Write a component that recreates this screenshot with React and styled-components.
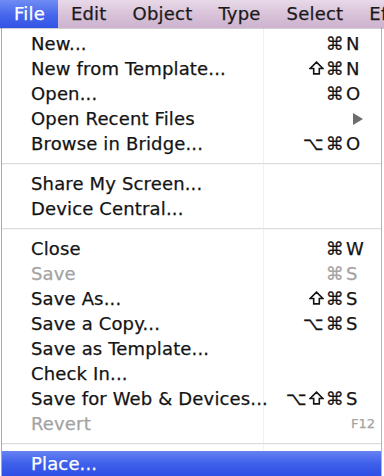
import React from "react";
import styled, { createGlobalStyle } from "styled-components";

const GlobalStyle = createGlobalStyle`
  html, body {
    margin: 0;
    padding: 0;
    background: #ffffff;
  }
  body {
    font-family: "DejaVu Sans", "Liberation Sans", sans-serif;
    font-size: 18px;
    letter-spacing: 0.15px;
    color: #111111;
    overflow: hidden;
    -webkit-text-stroke: 0.25px currentColor;
  }
`;

const titles = ["File", "Edit", "Object", "Type", "Select", "Effect"];

const groups = [
  [
    { label: "New...", mods: "⌘", key: "N" },
    { label: "New from Template...", mods: "⇧⌘", key: "N" },
    { label: "Open...", mods: "⌘", key: "O" },
    { label: "Open Recent Files", submenu: true },
    { label: "Browse in Bridge...", mods: "⌥⌘", key: "O" },
  ],
  [{ label: "Share My Screen..." }, { label: "Device Central..." }],
  [
    { label: "Close", mods: "⌘", key: "W" },
    { label: "Save", mods: "⌘", key: "S", disabled: true },
    { label: "Save As...", mods: "⇧⌘", key: "S" },
    { label: "Save a Copy...", mods: "⌥⌘", key: "S" },
    { label: "Save as Template..." },
    { label: "Check In..." },
    { label: "Save for Web & Devices...", mods: "⌥⇧⌘", key: "S" },
    { label: "Revert", fnKey: "F12", disabled: true },
  ],
  [{ label: "Place...", active: true }],
];

const ShiftIcon = () => (
  <ShiftSvg viewBox="0 0 16 15">
    <path
      d="M8 1.2 L14.8 8 H11 V13.8 H5 V8 H1.2 Z"
      fill="none"
      stroke="currentColor"
      strokeWidth="1.7"
      strokeLinejoin="miter"
    />
  </ShiftSvg>
);

const App = () => {
  return (
    <>
      <GlobalStyle />
      <Screen>
        <MenuBar>
          {titles.map((t, i) => (
            <MenuTitle key={t} $active={i === 0} $first={i === 0}>
              {t}
            </MenuTitle>
          ))}
        </MenuBar>
        <Menu>
          {groups.map((group, gi) => (
            <React.Fragment key={gi}>
              {gi > 0 && <Separator />}
              {group.map((item) => (
                <Row
                  key={item.label}
                  $disabled={item.disabled}
                  $active={item.active}
                >
                  <Label>{item.label}</Label>
                  {item.submenu && <Arrow />}
                  {item.key && (
                    <>
                      <Mods>
                        {item.mods
                          .split("")
                          .map((m, i) =>
                            m === "⇧" ? <ShiftIcon key={i} /> : <span key={i}>{m}</span>
                          )}
                      </Mods>
                      <Key>{item.key}</Key>
                    </>
                  )}
                  {item.fnKey && <FnKey>{item.fnKey}</FnKey>}
                </Row>
              ))}
            </React.Fragment>
          ))}
        </Menu>
      </Screen>
    </>
  );
};

export default App;

const Screen = styled.div`
  width: 384px;
  height: 476px;
  overflow: hidden;
  display: flex;
  flex-direction: column;
`;

const MenuBar = styled.div`
  height: 28px;
  flex: none;
  display: flex;
  align-items: stretch;
  white-space: nowrap;
  overflow: hidden;
  letter-spacing: 0.2px;
  background: linear-gradient(#e8d9e8, #d6bfd7 60%, #cdb3cf);
  box-shadow: 0 1px 0 rgba(80, 60, 90, 0.25);
  position: relative;
  z-index: 1;
`;

const MenuTitle = styled.div`
  display: flex;
  align-items: center;
  flex: none;
  padding: 0 13px 1px ${(p) => (p.$first ? "14px" : "13px")};
  color: ${(p) => (p.$active ? "#ffffff" : "#1a1a1a")};
  background: ${(p) =>
    p.$active ? "linear-gradient(#6f8cf4, #4566ec 55%, #3353e6)" : "none"};
`;

const Menu = styled.div`
  flex: 1;
  margin: 0 2px 0 1px;
  padding-top: 3px;
  border-left: 1px solid #a9a9a9;
  border-right: 1px solid #b4b4b4;
  background: linear-gradient(
      90deg,
      transparent 261px,
      #f1f1f1 261px,
      #f1f1f1 262px,
      transparent 262px
    ),
    #ffffff;
`;

const Row = styled.div`
  height: 25px;
  display: flex;
  align-items: center;
  padding: 0 15px 0 29px;
  white-space: nowrap;
  color: ${(p) =>
    p.$active ? "#ffffff" : p.$disabled ? "#a3a3a3" : "#141414"};
  background: ${(p) =>
    p.$active ? "linear-gradient(#6683f2, #3f60ea 50%, #2e4fe4)" : "transparent"};
`;

const Label = styled.span`
  flex: 1;
`;

const Mods = styled.span`
  display: flex;
  align-items: center;
  gap: 2px;
  margin-right: 2px;
`;

const ShiftSvg = styled.svg`
  width: 15px;
  height: 14px;
  margin-top: -1px;
`;

const Key = styled.span`
  width: 20px;
`;

const FnKey = styled.span`
  font-size: 13px;
  letter-spacing: 0;
  margin-right: -9px;
`;

const Arrow = styled.span`
  flex: none;
  width: 0;
  height: 0;
  margin-right: 3px;
  border-top: 6px solid transparent;
  border-bottom: 6px solid transparent;
  border-left: 10px solid #6d6d6d;
`;

const Separator = styled.div`
  height: 1px;
  margin: 7px 0;
  background: #dcdcdc;
  box-shadow: 0 1px 0 #f7f7f7;
`;
